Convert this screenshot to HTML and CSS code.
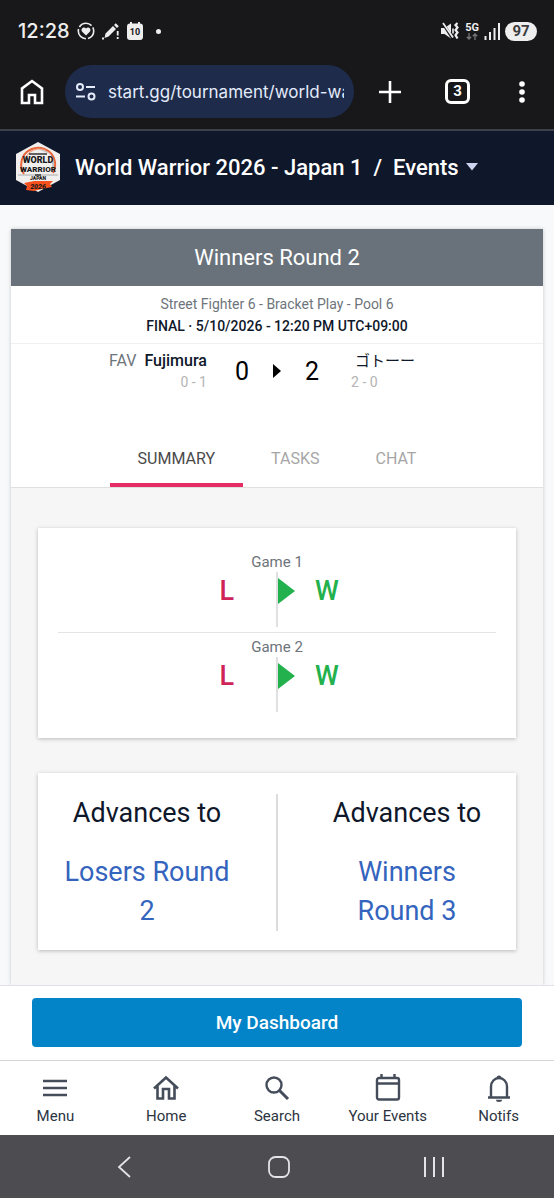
FILE: index.html
```html
<!DOCTYPE html>
<html lang="en">

<head>
    <meta charset="UTF-8">
    <meta name="viewport" content="width=device-width, initial-scale=1.0">
    <title>World Warrior 2026 - Japan 1</title>
    <link rel="stylesheet" href="styles.css">
</head>

<body>

    <!-- Phone status bar -->
    <div class="status-bar">
        <span class="clock">12:28</span>
        <svg class="status-health" width="18" height="18" viewBox="0 0 18 18">
            <circle cx="9" cy="9" r="7.7" fill="none" stroke="#eee" stroke-width="1.6" stroke-dasharray="14 2.1" stroke-dashoffset="4" />
            <path d="M9 13.5 5.200 9.800C3 7.200 6.600 4 9 6.500c2.400-2.500 6 .7 3.800 3.300z" fill="#eee" />
        </svg>
        <svg class="status-pen" width="18" height="18" viewBox="0 0 18 18">
            <path d="M3.500 11.500 11 4l3 3-7.500 7.500L2.500 16zM12 3l1.800-1.800 3 3L15 6z" fill="#eee" />
            <path d="M0 16.500h2M15.700 9v4.500M15.700 15v2" stroke="#eee" stroke-width="1.800" />
        </svg>
        <svg class="status-date" width="16" height="18" viewBox="0 0 16 18">
            <path d="M3 0h2v1.500h6V0h2v1.500a3 3 0 0 1 3 3V15a3 3 0 0 1-3 3H3a3 3 0 0 1-3-3V4.500a3 3 0 0 1 3-3z" fill="#eee" />
            <text x="8" y="13">10</text>
        </svg>
        <span class="status-dot"></span>
        <div class="status-right">
            <svg width="20" height="18" viewBox="0 0 20 18">
                <path d="M1 6h3.500L11 1.500v15L4.500 12H1z" fill="#eee" />
                <path d="M2 0 13 17" stroke="#18181a" stroke-width="3" />
                <path d="M3 1 13 15.500" stroke="#eee" stroke-width="1.800" />
                <path d="M13 6.500v5" stroke="#eee" stroke-width="1.600" />
                <path d="M17.500 1l-2 2 2 2.500-2 2.500 2 2.500-2 2.500 2 3.500" fill="none" stroke="#eee" stroke-width="2.200" />
            </svg>
            <span class="network">
                5G
                <svg width="12" height="7" viewBox="0 0 12 7">
                    <path d="M3 0v6M.8 3.800 3 6l2.200-2.200M9 7V1M6.800 3.200 9 1l2.200 2.200" fill="none" stroke="#77777b" stroke-width="1.300" />
                </svg>
            </span>
            <svg width="16" height="17" viewBox="0 0 16 17">
                <path d="M1.500 13v4M6 9v8M10.500 5v12M15 0v17" stroke="#eee" stroke-width="2" />
            </svg>
            <span class="battery">97</span>
        </div>
    </div>

    <!-- Browser toolbar -->
    <div class="browser-bar">
        <button class="tool" aria-label="Browser home">
            <svg width="24" height="26" viewBox="0 0 24 26">
                <path d="M2 24V9.500L12 2l10 7.500V24h-7v-8H9v8z" fill="none" stroke="#fff" stroke-width="2.600" />
            </svg>
        </button>
        <div class="address">
            <svg width="20" height="18" viewBox="0 0 20 18">
                <path d="M10 4h9M0 13.500h9" stroke="#e4ebfb" stroke-width="2" />
                <circle cx="4" cy="4" r="3" fill="none" stroke="#e4ebfb" stroke-width="2" />
                <circle cx="15.500" cy="13.500" r="3" fill="none" stroke="#e4ebfb" stroke-width="2" />
            </svg>
            <input type="text" class="url" aria-label="Address" value="start.gg/tournament/world-warrior-2026-japan-1">
        </div>
        <button class="tool tool-new" aria-label="New tab">
            <svg width="22" height="22" viewBox="0 0 22 22">
                <path d="M11 0v22M0 11h22" stroke="#fff" stroke-width="2.600" />
            </svg>
        </button>
        <button class="tool tool-tabs" aria-label="Tabs">3</button>
        <button class="tool" aria-label="More">
            <svg width="6" height="22" viewBox="0 0 6 22">
                <circle cx="3" cy="3" r="2.800" fill="#fff" />
                <circle cx="3" cy="11" r="2.800" fill="#fff" />
                <circle cx="3" cy="19" r="2.800" fill="#fff" />
            </svg>
        </button>
    </div>

    <!-- Tournament header -->
    <header class="site-header">
        <svg class="logo" width="46" height="52" viewBox="0 0 46 52">
            <path d="M23 1 45 13v26L23 51 1 39V13z" fill="#f1efee" />
            <path d="M23 8a16 16 0 0 1 14 24V14z" fill="#c4c2c2" />
            <path d="M9 33A17 17 0 1 1 38 32" fill="none" stroke="#e8663c" stroke-width="2" />
            <path d="M10 18A16 16 0 0 1 31 9" fill="none" stroke="#f28a60" stroke-width="1" />
            <path d="M14 13h18" stroke="#333" stroke-width="1.500" />
            <path d="M3 34h40" stroke="#aaa" stroke-width="1" />
            <text x="23" y="22" class="logo-text">WORLD</text>
            <text x="23" y="31" class="logo-text logo-warrior">WARRIOR</text>
            <path d="M20 34h6" stroke="#333" stroke-width="1.500" />
            <text x="23" y="39" class="logo-text logo-small">JAPAN</text>
            <path d="M9 42l10-2 19 0-3 3 2 3-10 2-8 2-8-1 1-4z" fill="#f4511e" />
            <text x="23" y="48" class="logo-text logo-year">2026</text>
        </svg>
        <nav class="crumbs">
            <a href="#">World Warrior 2026 - Japan 1</a>
            <span>/</span>
            <button class="events-menu">Events
                <svg width="12" height="8" viewBox="0 0 12 8"><path d="M0 0h12L6 7.500z" fill="#ccd5f0" /></svg>
            </button>
        </nav>
    </header>

    <!-- Match details -->
    <main class="page">
        <section class="match">
            <h1 class="match-title">Winners Round 2</h1>
            <div class="match-info">
                <p>Street Fighter 6 - Bracket Play - Pool 6</p>
                <p class="match-time">FINAL · 5/10/2026 - 12:20 PM UTC+09:00</p>
            </div>

            <div class="versus">
                <div class="player player-left">
                    <div class="player-name"><span class="team">FAV</span> Fujimura</div>
                    <div class="record">0 - 1</div>
                </div>
                <div class="score">
                    <span>0</span>
                    <svg width="10" height="14" viewBox="0 0 10 14"><path d="M1 0l8 7-8 7z" fill="#000" /></svg>
                    <span>2</span>
                </div>
                <div class="player">
                    <div class="player-name player-jp" lang="ja">ゴトーー</div>
                    <div class="record">2 - 0</div>
                </div>
            </div>

            <div class="tabs" role="tablist">
                <button class="tab active" role="tab" aria-selected="true">SUMMARY</button>
                <button class="tab" role="tab" aria-selected="false">TASKS</button>
                <button class="tab" role="tab" aria-selected="false">CHAT</button>
            </div>

            <div class="summary">
                <div class="card">
                    <div class="game">
                        <div class="game-label">Game 1</div>
                        <div class="game-result">
                            <span class="loss">L</span>
                            <span class="game-line"></span>
                            <span class="win"><svg width="17" height="26" viewBox="0 0 17 26"><path d="M0 0l17 13L0 26z" fill="#23b14d" /></svg>W</span>
                        </div>
                    </div>
                    <div class="game">
                        <div class="game-label">Game 2</div>
                        <div class="game-result">
                            <span class="loss">L</span>
                            <span class="game-line"></span>
                            <span class="win"><svg width="17" height="26" viewBox="0 0 17 26"><path d="M0 0l17 13L0 26z" fill="#23b14d" /></svg>W</span>
                        </div>
                    </div>
                </div>

                <div class="card advances">
                    <div class="advance">
                        <h2>Advances to</h2>
                        <a href="#">Losers Round 2</a>
                    </div>
                    <div class="advance">
                        <h2>Advances to</h2>
                        <a href="#">Winners Round 3</a>
                    </div>
                </div>
            </div>
        </section>
    </main>

    <!-- Bottom bar -->
    <div class="dashboard">
        <button class="dashboard-btn">My Dashboard</button>
    </div>
    <nav class="bottom-nav">
        <a href="#">
            <svg width="28" height="28" viewBox="0 0 28 28">
                <path d="M2 7h24M2 14h24M2 21h24" stroke="#454d5b" stroke-width="2.600" />
            </svg>
            Menu
        </a>
        <a href="#">
            <svg width="28" height="28" viewBox="0 0 28 28">
                <path d="M2 14.500 14 3.500l12 11M5.500 12v12.500H11V15h6v9.500h5.500V12" fill="none" stroke="#454d5b" stroke-width="2.600" />
            </svg>
            Home
        </a>
        <a href="#">
            <svg width="28" height="28" viewBox="0 0 28 28">
                <circle cx="11" cy="11" r="7.500" fill="none" stroke="#454d5b" stroke-width="2.400" />
                <path d="M16.500 16.500 25 25" stroke="#454d5b" stroke-width="3" />
            </svg>
            Search
        </a>
        <a href="#">
            <svg width="28" height="28" viewBox="0 0 28 28">
                <rect x="3" y="4" width="22" height="21.500" rx="2" fill="none" stroke="#454d5b" stroke-width="2.400" />
                <path d="M3 9.500h22M7.500 0v4M20.500 0v4" stroke="#454d5b" stroke-width="2.400" />
            </svg>
            Your Events
        </a>
        <a href="#">
            <svg width="28" height="28" viewBox="0 0 28 28">
                <path d="M3 23.500h22M6 23.500v-11a8 8.500 0 0 1 16 0v11" fill="none" stroke="#454d5b" stroke-width="2.400" />
                <path d="M11.500 4a2.500 2.500 0 0 1 5 0zM11 25.800h6a3 2.200 0 0 1-6 0z" fill="#454d5b" />
            </svg>
            Notifs
        </a>
    </nav>

    <!-- Phone navigation keys -->
    <div class="phone-keys">
        <button aria-label="Back">
            <svg width="14" height="22" viewBox="0 0 14 22"><path d="M13 1 2 11l11 10" fill="none" stroke="#e4e4e6" stroke-width="1.800" /></svg>
        </button>
        <button aria-label="Home screen">
            <svg width="22" height="22" viewBox="0 0 22 22"><rect x="1" y="1" width="20" height="20" rx="6.500" fill="none" stroke="#e4e4e6" stroke-width="1.800" /></svg>
        </button>
        <button aria-label="Recent apps">
            <svg width="22" height="22" viewBox="0 0 22 22"><path d="M2 1v20M11 1v20M20 1v20" stroke="#e4e4e6" stroke-width="2" /></svg>
        </button>
    </div>

</body>

</html>
```
FILE: styles.css
```css
* {
    box-sizing: border-box;
}

body {
    margin: 0;
    min-height: 100vh;
    display: flex;
    flex-direction: column;
    padding-bottom: 2px;
    background-color: #fff;
    color: #0f172a;
    font-family: Roboto, "Noto Sans CJK JP", sans-serif;
}

button {
    padding: 0;
    border: none;
    background: none;
    color: inherit;
    font-family: inherit;
    cursor: pointer;
}

a {
    color: inherit;
    text-decoration: none;
}

svg {
    display: block;
    flex: none;
}

h1,
h2,
p {
    margin: 0;
    font-weight: 400;
}

/* Phone status bar */
.status-bar {
    display: flex;
    align-items: center;
    gap: 7px;
    height: 62px;
    padding: 0 17px 0 18px;
    background-color: #18181a;
    color: #eee;
}

.clock {
    font-family: Inter, sans-serif;
    font-size: 20px;
    font-weight: 500;
}

.status-date text {
    fill: #18181a;
    font-size: 9px;
    font-weight: 700;
    text-anchor: middle;
}

.status-dot {
    width: 5px;
    height: 5px;
    margin-left: 6px;
    border-radius: 50%;
    background-color: #eee;
}

.status-right {
    display: flex;
    align-items: center;
    gap: 5px;
    margin-left: auto;
}

.network {
    display: flex;
    flex-direction: column;
    align-items: center;
    font-size: 11px;
    font-weight: 700;
    line-height: 11px;
}

.battery {
    width: 32px;
    border-radius: 10px;
    background-color: #eee;
    color: #3c3c3e;
    font-size: 15px;
    font-weight: 700;
    line-height: 19px;
    text-align: center;
}

/* Browser toolbar */
.browser-bar {
    display: flex;
    align-items: center;
    height: 67px;
    padding: 0 29px 8px 20px;
    background-color: #18181a;
    color: #fff;
}

.address {
    flex: 1;
    display: flex;
    align-items: center;
    gap: 12px;
    min-width: 0;
    height: 53px;
    margin: 0 25px 0 21px;
    padding: 0 10px 0 11px;
    border-radius: 27px;
    background-color: #1e2b4b;
}

.url {
    flex: 1;
    min-width: 0;
    padding: 0;
    border: none;
    outline: none;
    background: none;
    color: #e4ebfb;
    font-family: Inter, sans-serif;
    font-size: 17px;
}

.tool-new {
    margin-right: 44px;
}

.tool-tabs {
    width: 25px;
    height: 25px;
    margin-right: 49px;
    border: 3px solid #fff;
    border-radius: 6px;
    font-size: 15px;
    font-weight: 700;
    line-height: 19px;
}

/* Tournament header */
.site-header {
    display: flex;
    align-items: center;
    gap: 14px;
    height: 76px;
    padding: 0 15px 2px;
    border-top: 2px solid #3c4048;
    background-color: #0f172a;
    color: #fff;
}

.logo-text {
    fill: #1a1a1a;
    font-size: 9px;
    font-weight: 900;
    text-anchor: middle;
}

.logo-warrior {
    font-size: 8px;
}

.logo-small {
    font-size: 5px;
}

.logo-year {
    font-size: 7px;
    font-style: italic;
}

.crumbs {
    display: flex;
    align-items: center;
    gap: 11px;
    font-size: 22px;
    font-weight: 500;
}

.events-menu {
    display: flex;
    align-items: center;
    gap: 7px;
    font-size: 22px;
    font-weight: 500;
}

/* Match details */
.page {
    flex: 1;
    display: flex;
    padding: 24px 11px 0;
    background-color: #f8f9fb;
}

.match {
    flex: 1;
    display: flex;
    flex-direction: column;
    background-color: #fff;
    box-shadow: 0 0 4px rgba(0, 0, 0, 0.2);
}

.match-title {
    background-color: #69727a;
    color: #fff;
    font-size: 22px;
    line-height: 57px;
    text-align: center;
}

.match-info {
    padding: 7px 0 6px;
    border-bottom: 1px solid #f0f0f0;
    color: #6e747b;
    font-size: 14px;
    line-height: 22px;
    text-align: center;
}

.match-time {
    color: #0f172a;
    font-weight: 500;
}

.versus {
    display: grid;
    grid-template-columns: 1fr auto 1fr;
    padding-top: 6px;
}

.player {
    padding-left: 4px;
}

.player-left {
    padding-left: 0;
    text-align: right;
}

.player-name {
    font-size: 16px;
    font-weight: 500;
    line-height: 22px;
}

.player-jp {
    padding-left: 4px;
    font-size: 15px;
    font-weight: 400;
}

.team {
    margin-right: 4px;
    color: #6e747b;
    font-weight: 400;
}

.record {
    color: #b4b4b4;
    font-size: 14px;
    line-height: 20px;
}

.score {
    display: flex;
    align-items: center;
    gap: 23px;
    height: 42px;
    padding: 0 28px;
    color: #000;
    font-size: 25px;
}

.tabs {
    display: flex;
    justify-content: center;
    margin-top: 37px;
    border-bottom: 1px solid #e0e0e0;
}

.tab {
    height: 58px;
    padding: 4px 28px 0;
    border-bottom: 4px solid transparent;
    color: #a6a6a6;
    font-size: 16px;
}

.tab.active {
    border-bottom-color: #e52d64;
    color: #4a4a4a;
}

/* Summary cards */
.summary {
    flex: 1;
    display: flex;
    flex-direction: column;
    gap: 35px;
    padding: 40px 27px 34px;
    background-color: #f6f6f6;
}

.card {
    padding: 20px;
    background-color: #fff;
    box-shadow: 0 1px 4px rgba(0, 0, 0, 0.25);
}

.game {
    padding: 4px 0 5px;
    border-bottom: 1px solid #e4e4e4;
}

.game:last-child {
    border-bottom-color: transparent;
}

.game-label {
    color: #6e747b;
    font-size: 15px;
    line-height: 20px;
    text-align: center;
}

.game-result {
    display: grid;
    grid-template-columns: 1fr 2px 1fr;
    font-size: 27px;
    font-weight: 500;
    line-height: 38px;
}

.game-line {
    height: 55px;
    background-color: #e0e0e0;
}

.loss {
    padding-right: 42px;
    color: #cf2459;
    text-align: right;
}

.win {
    display: flex;
    align-items: center;
    gap: 20px;
    height: 38px;
    color: #23b14d;
}

.advances {
    display: flex;
    padding: 21px 20px 19px;
    font-size: 27px;
    line-height: 39px;
    text-align: center;
}

.advance {
    flex: 1;
    padding-right: 40px;
}

.advance + .advance {
    padding: 0 0 0 40px;
    border-left: 2px solid #dcdcdc;
}

.advance h2 {
    margin-bottom: 20px;
    font-size: 27px;
}

.advance a {
    color: #3464bd;
}

/* Bottom bar */
.dashboard {
    padding: 12px 32px 13px;
    border-top: 1px solid #dfe0e8;
    background-color: #fff;
}

.dashboard-btn {
    display: block;
    width: 100%;
    border-radius: 4px;
    background-color: #0384c8;
    color: #fff;
    font-size: 19px;
    font-weight: 500;
    line-height: 49px;
}

.bottom-nav {
    display: flex;
    height: 75px;
    border-top: 1px solid #d4d5d8;
    background-color: #fff;
}

.bottom-nav a {
    flex: 1;
    display: flex;
    flex-direction: column;
    align-items: center;
    gap: 4px;
    padding-top: 13px;
    color: #2c3441;
    font-size: 15px;
    line-height: 20px;
}

/* Phone navigation keys */
.phone-keys {
    display: flex;
    height: 63px;
    padding: 0 43px 0 47px;
    background-color: #4d4c51;
}

.phone-keys button {
    flex: 1;
    display: flex;
    align-items: center;
    justify-content: center;
}
```
